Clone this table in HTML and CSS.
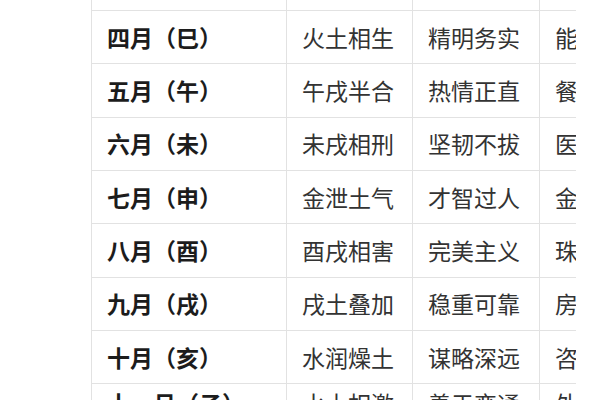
FILE: index.html
```html
<!DOCTYPE html>
<html lang="zh-CN">
<head>
<meta charset="utf-8">
<link rel="stylesheet" href="styles.css">
</head>
<body>
<div class="wrap">
  <div class="table">
    <div class="cell c1 head"></div><div class="cell"></div><div class="cell"></div><div class="cell last"></div>
    <div class="cell c1 head">四月（巳）</div><div class="cell">火土相生</div><div class="cell">精明务实</div><div class="cell last">能源</div>
    <div class="cell c1 head">五月（午）</div><div class="cell">午戌半合</div><div class="cell">热情正直</div><div class="cell last">餐饮</div>
    <div class="cell c1 head">六月（未）</div><div class="cell">未戌相刑</div><div class="cell">坚韧不拔</div><div class="cell last">医疗</div>
    <div class="cell c1 head">七月（申）</div><div class="cell">金泄土气</div><div class="cell">才智过人</div><div class="cell last">金融</div>
    <div class="cell c1 head">八月（酉）</div><div class="cell">酉戌相害</div><div class="cell">完美主义</div><div class="cell last">珠宝</div>
    <div class="cell c1 head">九月（戌）</div><div class="cell">戌土叠加</div><div class="cell">稳重可靠</div><div class="cell last">房产</div>
    <div class="cell c1 head">十月（亥）</div><div class="cell">水润燥土</div><div class="cell">谋略深远</div><div class="cell last">咨询</div>
    <div class="cell c1 head tail">十一月（子）</div><div class="cell tail">水土相激</div><div class="cell tail">善于变通</div><div class="cell last tail">外贸</div>
  </div>
</div>
</body>
</html>
```
FILE: styles.css
```css
html, body {
  margin: 0;
  padding: 0;
  background: #ffffff;
}
.wrap {
  margin-left: 91px;
  width: 485px;
  height: 400px;
  overflow: hidden;
}
.table {
  margin-top: -42.33px;
  display: grid;
  grid-template-columns: 196px 126px 127px 160px;
  grid-auto-rows: 53.333px;
  font-family: "Noto Sans CJK SC", "Noto Sans", sans-serif;
  font-size: 23px;
  color: #333333;
}
.cell {
  box-sizing: border-box;
  border-right: 1px solid #e2e2e2;
  border-bottom: 1px solid #e2e2e2;
  padding-left: 15px;
  display: flex;
  align-items: center;
  white-space: nowrap;
  line-height: 1;
}
.c1 {
  border-left: 1px solid #e2e2e2;
}
.head {
  font-weight: bold;
  color: #1c1c1c;
}
.last {
  border-right: none;
}
.tail {
  align-items: flex-start;
  padding-top: 8px;
}
```
